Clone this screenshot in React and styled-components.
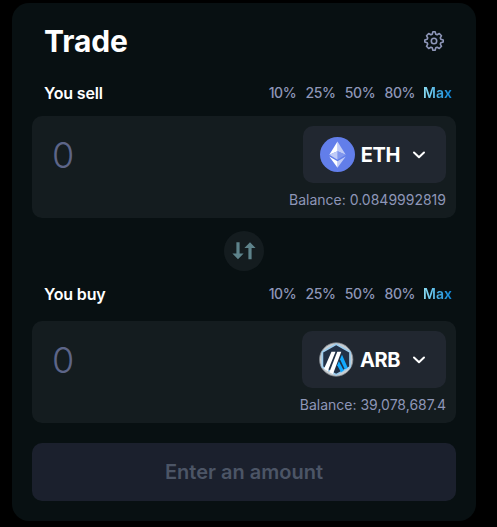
import React from "react";
import styled, { createGlobalStyle } from "styled-components";

const Theme = {
  page: "#000",
  card: "#081012",
  panel: "#141c1f",
  token: "#212730",
  muted: "#8e96b8",
  placeholder: "#5d6588",
};

const GlobalStyle = createGlobalStyle`
  * {
    box-sizing: border-box;
  }

  body {
    margin: 0;
    background: ${Theme.page};
    color: #fff;
    font-family: Inter, "Liberation Sans", sans-serif;
  }

  button {
    border: 0;
    font-family: inherit;
    color: inherit;
  }
`;

const Page = styled.main`
  width: 497px;
  height: 527px;
  padding: 3px 21px 6px 12px;
  overflow: hidden;
`;

const Card = styled.section`
  height: 518px;
  padding: 20px;
  border-radius: 17px;
  background: ${Theme.card};
`;

const Header = styled.header`
  display: flex;
  align-items: center;
  justify-content: space-between;
  height: 36px;
  padding: 0 12px;
`;

const Title = styled.h1`
  margin: 0;
  font-size: 30px;
  line-height: 36px;
  font-weight: 700;
  letter-spacing: -0.1px;
`;

const IconButton = styled.button`
  display: flex;
  padding: 0;
  background: none;
  color: ${Theme.muted};
`;

const SideHeader = styled.div`
  display: flex;
  align-items: center;
  justify-content: space-between;
  height: 24px;
  margin-top: ${({ $top }) => $top}px;
  padding: 0 4px 0 12px;
`;

const SideLabel = styled.span`
  font-size: 16px;
  font-weight: 600;
  letter-spacing: -0.15px;
`;

const Shares = styled.div`
  display: flex;
  gap: 9.3px;
`;

const Share = styled.button`
  padding: 0;
  background: none;
  color: ${Theme.muted};
  font-size: 14px;
  line-height: 20px;
  font-weight: 500;
  letter-spacing: -0.4px;
`;

const MaxShare = styled(Share)`
  margin-left: -1.3px;
  background: linear-gradient(90deg, #8fe0f5, #0b84d8);
  background-clip: text;
  color: transparent;
  font-weight: 600;
  letter-spacing: 0;
`;

const Panel = styled.div`
  display: flex;
  justify-content: space-between;
  height: 102px;
  margin-top: ${({ $top }) => $top}px;
  padding: 10px 10px 0 20px;
  border-radius: 10px;
  background: ${Theme.panel};
`;

const Amount = styled.span`
  color: ${Theme.placeholder};
  font-size: 36px;
  line-height: 58px;
  font-weight: 350;
`;

const PanelSide = styled.div`
  display: flex;
  flex-direction: column;
  align-items: flex-end;
`;

const TokenButton = styled.button`
  display: flex;
  align-items: center;
  height: 57px;
  padding: 0 20px 0 17px;
  border-radius: 10px;
  background: ${Theme.token};
  font-size: 20px;
  font-weight: 700;
  letter-spacing: -0.4px;

  & span {
    margin: 0 12px 0 5.5px;
  }
`;

const Balance = styled.span`
  margin-top: 7px;
  color: ${Theme.muted};
  font-size: 14px;
  line-height: 20px;
`;

const SwapButton = styled.button`
  display: flex;
  align-items: center;
  justify-content: center;
  width: 40px;
  height: 40px;
  margin: 13px auto 0;
  padding: 0;
  border-radius: 50%;
  background: ${Theme.panel};
`;

const SubmitButton = styled.button`
  display: block;
  width: 100%;
  height: 58px;
  margin-top: 20px;
  border-radius: 10px;
  background: #1b202d;
  color: #4c5566;
  font-size: 20px;
  font-weight: 600;
`;

const GearIcon = () => (
  <svg width="20" height="20" viewBox="0 0 20 20" fill="none" stroke="currentColor" strokeWidth="1.6" strokeLinejoin="round">
    <path d="M8.9.8h2.2l.7 2.400 1.300.5 2.200-1.200 2.200 2.200-1.200 2.200.5 1.300 2.400.7v2.200l-2.400.7-.5 1.300 1.200 2.200-2.200 2.200-2.200-1.200-1.300.5-.7 2.400H8.900l-.7-2.400-1.300-.5-2.200 1.200-2.200-2.200 1.200-2.200-.5-1.300-2.400-.7V8.900l2.400-.7.5-1.300-1.200-2.200 2.200-2.200 2.200 1.200 1.300-.5z" />
    <circle cx="10" cy="10" r="2.700" />
  </svg>
);

const EthIcon = () => (
  <svg width="35" height="35" viewBox="0 0 35 35">
    <circle cx="17.5" cy="17.5" r="17.5" fill="#627eea" />
    <path d="M17.5 4.500v9.700l8.200 3.600z" fill="#c0cbf7" />
    <path d="M17.5 4.500 9.300 17.800l8.200-3.600z" fill="#fff" />
    <path d="M17.5 14.200v8.500l8.200-4.900z" fill="#8197ee" />
    <path d="m9.300 17.800 8.200 4.900v-8.500z" fill="#c0cbf7" />
    <path d="M17.5 24.200v6.600l8.200-11.400z" fill="#c0cbf7" />
    <path d="M17.5 30.800v-6.600l-8.200-4.800z" fill="#fff" />
  </svg>
);

const ArbIcon = () => (
  <svg width="35" height="35" viewBox="0 0 35 35">
    <circle cx="17.2" cy="17.5" r="16.7" fill="#c9cdd0" stroke="#7d848b" strokeWidth="0.8" />
    <path d="M17.2 2.200 31 10v15L17.200 32.800 3.400 25V10z" fill="#213147" stroke="#9dcced" strokeWidth="1.7" strokeLinejoin="round" />
    <path d="m21 17.200 2-4.400 5.700 12.900-2.800 1.900z" fill="#12aaff" />
    <path d="m19.900 19.200 4.900 9.300-2.800 1.800-3.800-7.100z" fill="#12aaff" />
    <path d="M12.500 9.700h4L8.700 29.200 5 26.700z" fill="#fff" />
    <path d="M18.300 9.700h4L14 32l-3.700-1.800z" fill="#fff" />
  </svg>
);

const ChevronIcon = () => (
  <svg width="14" height="10" viewBox="0 0 14 10" fill="none" stroke="#fff" strokeWidth="2" strokeLinecap="round" strokeLinejoin="round">
    <path d="m2 2.500 5 4.700 5-4.700" />
  </svg>
);

const SwapIcon = () => (
  <svg width="24" height="18" viewBox="0 0 24 18" fill="#5e838b">
    <path d="M4.400 .3h3.200v11.200h4L6 17.300.4 11.500h4z" />
    <path d="M16.400 17.300h3.200V6.100h4L18 .3l-5.600 5.800h4z" />
  </svg>
);

const shares = ["10%", "25%", "50%", "80%"];

const SideTitle = ({ label, top }) => (
  <SideHeader $top={top}>
    <SideLabel>{label}</SideLabel>
    <Shares>
      {shares.map((share) => (
        <Share key={share}>{share}</Share>
      ))}
      <MaxShare>Max</MaxShare>
    </Shares>
  </SideHeader>
);

const TokenPanel = ({ icon, symbol, balance, top }) => (
  <Panel $top={top}>
    <Amount>0</Amount>
    <PanelSide>
      <TokenButton>
        {icon}
        <span>{symbol}</span>
        <ChevronIcon />
      </TokenButton>
      <Balance>Balance: {balance}</Balance>
    </PanelSide>
  </Panel>
);

const App = () => (
  <>
    <GlobalStyle />
    <Page>
      <Card>
        <Header>
          <Title>Trade</Title>
          <IconButton aria-label="Settings">
            <GearIcon />
          </IconButton>
        </Header>
        <SideTitle label="You sell" top={22} />
        <TokenPanel icon={<EthIcon />} symbol="ETH" balance="0.0849992819" top={11} />
        <SwapButton aria-label="Switch tokens">
          <SwapIcon />
        </SwapButton>
        <SideTitle label="You buy" top={11} />
        <TokenPanel icon={<ArbIcon />} symbol="ARB" balance="39,078,687.4" top={15} />
        <SubmitButton>Enter an amount</SubmitButton>
      </Card>
    </Page>
  </>
);

export default App;
